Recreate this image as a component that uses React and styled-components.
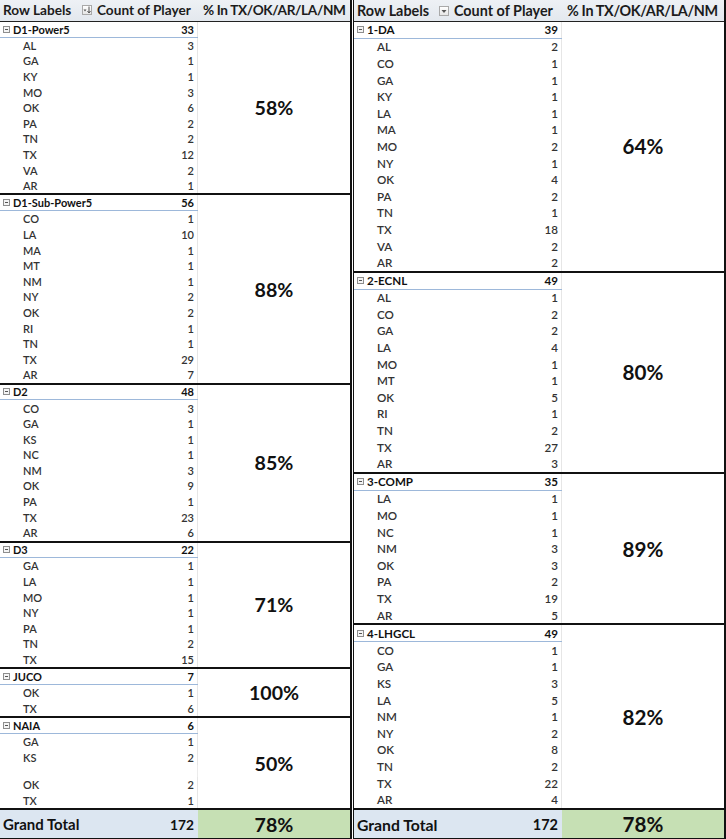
import React from 'react';
import styled, { createGlobalStyle } from 'styled-components';

const GlobalStyle = createGlobalStyle`
    html, body {
        margin: 0;
        padding: 0;
        background: #ffffff;
    }
    body {
        font-family: Lato, "Liberation Sans", sans-serif;
        color: #1a1a1a;
    }
`;

const leftData = [
    { name: 'D1-Power5', total: 33, pct: '58%', rows: [['AL', 3], ['GA', 1], ['KY', 1], ['MO', 3], ['OK', 6], ['PA', 2], ['TN', 2], ['TX', 12], ['VA', 2], ['AR', 1]] },
    { name: 'D1-Sub-Power5', total: 56, pct: '88%', rows: [['CO', 1], ['LA', 10], ['MA', 1], ['MT', 1], ['NM', 1], ['NY', 2], ['OK', 2], ['RI', 1], ['TN', 1], ['TX', 29], ['AR', 7]] },
    { name: 'D2', total: 48, pct: '85%', rows: [['CO', 3], ['GA', 1], ['KS', 1], ['NC', 1], ['NM', 3], ['OK', 9], ['PA', 1], ['TX', 23], ['AR', 6]] },
    { name: 'D3', total: 22, pct: '71%', rows: [['GA', 1], ['LA', 1], ['MO', 1], ['NY', 1], ['PA', 1], ['TN', 2], ['TX', 15]] },
    { name: 'JUCO', total: 7, pct: '100%', rows: [['OK', 1], ['TX', 6]] },
    { name: 'NAIA', total: 6, pct: '50%', rows: [['GA', 1], ['KS', 2], null, ['OK', 2], ['TX', 1]] },
];

const rightData = [
    { name: '1-DA', total: 39, pct: '64%', rows: [['AL', 2], ['CO', 1], ['GA', 1], ['KY', 1], ['LA', 1], ['MA', 1], ['MO', 2], ['NY', 1], ['OK', 4], ['PA', 2], ['TN', 1], ['TX', 18], ['VA', 2], ['AR', 2]] },
    { name: '2-ECNL', total: 49, pct: '80%', rows: [['AL', 1], ['CO', 2], ['GA', 2], ['LA', 4], ['MO', 1], ['MT', 1], ['OK', 5], ['RI', 1], ['TN', 2], ['TX', 27], ['AR', 3]] },
    { name: '3-COMP', total: 35, pct: '89%', rows: [['LA', 1], ['MO', 1], ['NC', 1], ['NM', 3], ['OK', 3], ['PA', 2], ['TX', 19], ['AR', 5]] },
    { name: '4-LHGCL', total: 49, pct: '82%', rows: [['CO', 1], ['GA', 1], ['KS', 3], ['LA', 5], ['NM', 1], ['NY', 2], ['OK', 8], ['TN', 2], ['TX', 22], ['AR', 4]] },
];

const Page = styled.div`
    display: flex;
    width: 726px;
    height: 839px;
    overflow: hidden;
`;

const Pivot = styled.div`
    display: flex;
    flex-direction: column;
    width: ${props => props.$width}px;
    height: 839px;
    box-sizing: border-box;
    font-size: ${props => props.$base}px;
    border-right: 2px solid #111;
    border-left: ${props => props.$left ? '1px solid #111' : 'none'};
    margin-left: ${props => props.$left ? '1px' : '0'};
`;

const Header = styled.div`
    display: grid;
    grid-template-columns: ${props => props.$cols};
    height: 22px;
    box-sizing: border-box;
    background: linear-gradient(#eef1f5, #e3e8ee);
    border-bottom: 1.5px solid #222;
    align-items: center;
    font-weight: 700;
    font-size: 1.24em;
    color: #1c1c1c;
    white-space: nowrap;
`;

const HeadCell = styled.div`
    display: flex;
    align-items: center;
    justify-content: space-between;
    padding-left: ${props => props.$pad || 3}px;
    padding-right: 3px;
    letter-spacing: ${props => props.$tight ? '-0.35px' : 'normal'};
    overflow: hidden;
`;

const FilterButton = styled.span`
    display: inline-flex;
    align-items: center;
    justify-content: center;
    width: 10px;
    height: 10px;
    box-sizing: border-box;
    border: 1px solid #a9a9a9;
    background: linear-gradient(#ffffff, #e6e6e6);
    flex-shrink: 0;
`;

const Block = styled.div`
    display: flex;
    border-bottom: ${props => props.$last ? 'none' : '2px solid #111'};
`;

const Rows = styled.div`
    display: flex;
    flex-direction: column;
    width: ${props => props.$width}px;
    flex-shrink: 0;
`;

const Row = styled.div`
    display: grid;
    grid-template-columns: ${props => props.$cols};
    height: ${props => props.$h}px;
    box-sizing: border-box;
    align-items: center;
    font-weight: ${props => props.$group ? 700 : 600};
    color: ${props => props.$group ? '#111' : '#333'};
    border-bottom: ${props => props.$group ? '1px solid #9db8da' : 'none'};
    white-space: nowrap;
`;

const Spacer = styled.div`
    height: ${props => props.$h}px;
    border-right: 1px solid #ececec;
    margin-left: auto;
    width: 0;
`;

const Label = styled.div`
    display: flex;
    align-items: center;
    padding-left: ${props => props.$group ? 3 : 23}px;
    gap: 3px;
`;

const Count = styled.div`
    text-align: right;
    padding-right: 3px;
    height: 100%;
    display: flex;
    align-items: center;
    justify-content: flex-end;
    border-right: 1px solid #e6e6e6;
    box-sizing: border-box;
`;

const Collapse = styled.span`
    position: relative;
    width: 7px;
    height: 7px;
    box-sizing: border-box;
    border: 1px solid #8e8e8e;
    background: #f4f4f4;
    flex-shrink: 0;

    &::after {
        content: '';
        position: absolute;
        left: 1px;
        right: 1px;
        top: 2px;
        height: 1px;
        background: #555;
    }
`;

const PctCell = styled.div`
    flex: 1;
    display: flex;
    align-items: center;
    justify-content: center;
    font-weight: 700;
    font-size: 1.78em;
    color: #111;
    background: ${props => props.$total ? '#c6e0b4' : '#ffffff'};
`;

const TotalRow = styled.div`
    display: flex;
    height: 31px;
    box-sizing: border-box;
    margin-top: auto;
    border-top: 2px solid #111;
    border-bottom: 1px solid #111;
`;

const TotalLabel = styled.div`
    display: flex;
    align-items: center;
    justify-content: space-between;
    width: ${props => props.$width}px;
    flex-shrink: 0;
    background: #dce6f1;
    font-weight: 700;
    font-size: 1.36em;
    color: #111;
    padding: 0 4px 0 3px;
    box-sizing: border-box;
`;

const TotalNum = styled.span`
    font-size: 0.92em;
`;

const SortedIcon = () => (
    <svg width="8" height="8" viewBox="0 0 8 8">
        <path d="M0.5 3.5 L3.5 3.5 L2 5.5 Z" fill="#555" />
        <path d="M6 0.5 L6 6.5" stroke="#555" strokeWidth="1" />
        <path d="M4.5 5 L6 7 L7.5 5" fill="none" stroke="#555" strokeWidth="1" />
    </svg>
);

const DropIcon = () => (
    <svg width="8" height="8" viewBox="0 0 8 8">
        <path d="M1.5 3 L6.5 3 L4 6 Z" fill="#555" />
    </svg>
);

const PivotTable = ({ data, width, labelW, countW, base, rowH, left, sorted }) => {
    const cols = `${labelW}px ${countW}px 1fr`;
    const rowCols = `${labelW}px ${countW}px`;
    return (
        <Pivot $width={width} $base={base} $left={left}>
            <Header $cols={cols}>
                <HeadCell $pad={3}>
                    <span>Row Labels</span>
                    <FilterButton>{sorted ? <SortedIcon /> : <DropIcon />}</FilterButton>
                </HeadCell>
                <HeadCell $pad={2}>Count of Player</HeadCell>
                <HeadCell $pad={5} $tight>% In TX/OK/AR/LA/NM</HeadCell>
            </Header>

            {data.map((group, gi) => (
                <Block key={group.name} $last={gi === data.length - 1}>
                    <Rows $width={labelW + countW}>
                        <Row $cols={rowCols} $h={rowH} $group>
                            <Label $group><Collapse />{group.name}</Label>
                            <Count>{group.total}</Count>
                        </Row>
                        {group.rows.map((r, ri) => r ? (
                            <Row key={ri} $cols={rowCols} $h={rowH}>
                                <Label>{r[0]}</Label>
                                <Count>{r[1]}</Count>
                            </Row>
                        ) : (
                            <Spacer key={ri} $h={12} />
                        ))}
                    </Rows>
                    <PctCell>{group.pct}</PctCell>
                </Block>
            ))}

            <TotalRow>
                <TotalLabel $width={labelW + countW}>
                    <span>Grand Total</span>
                    <TotalNum>172</TotalNum>
                </TotalLabel>
                <PctCell $total>78%</PctCell>
            </TotalRow>
        </Pivot>
    );
};

export default function App() {
    return (
        <>
            <GlobalStyle />
            <Page>
                <PivotTable data={leftData} width={352} labelW={95} countW={103} base={11} rowH={15.6} sorted />
                <PivotTable data={rightData} width={373} labelW={98} countW={110} base={11.6} rowH={16.6} left />
            </Page>
        </>
    );
}
